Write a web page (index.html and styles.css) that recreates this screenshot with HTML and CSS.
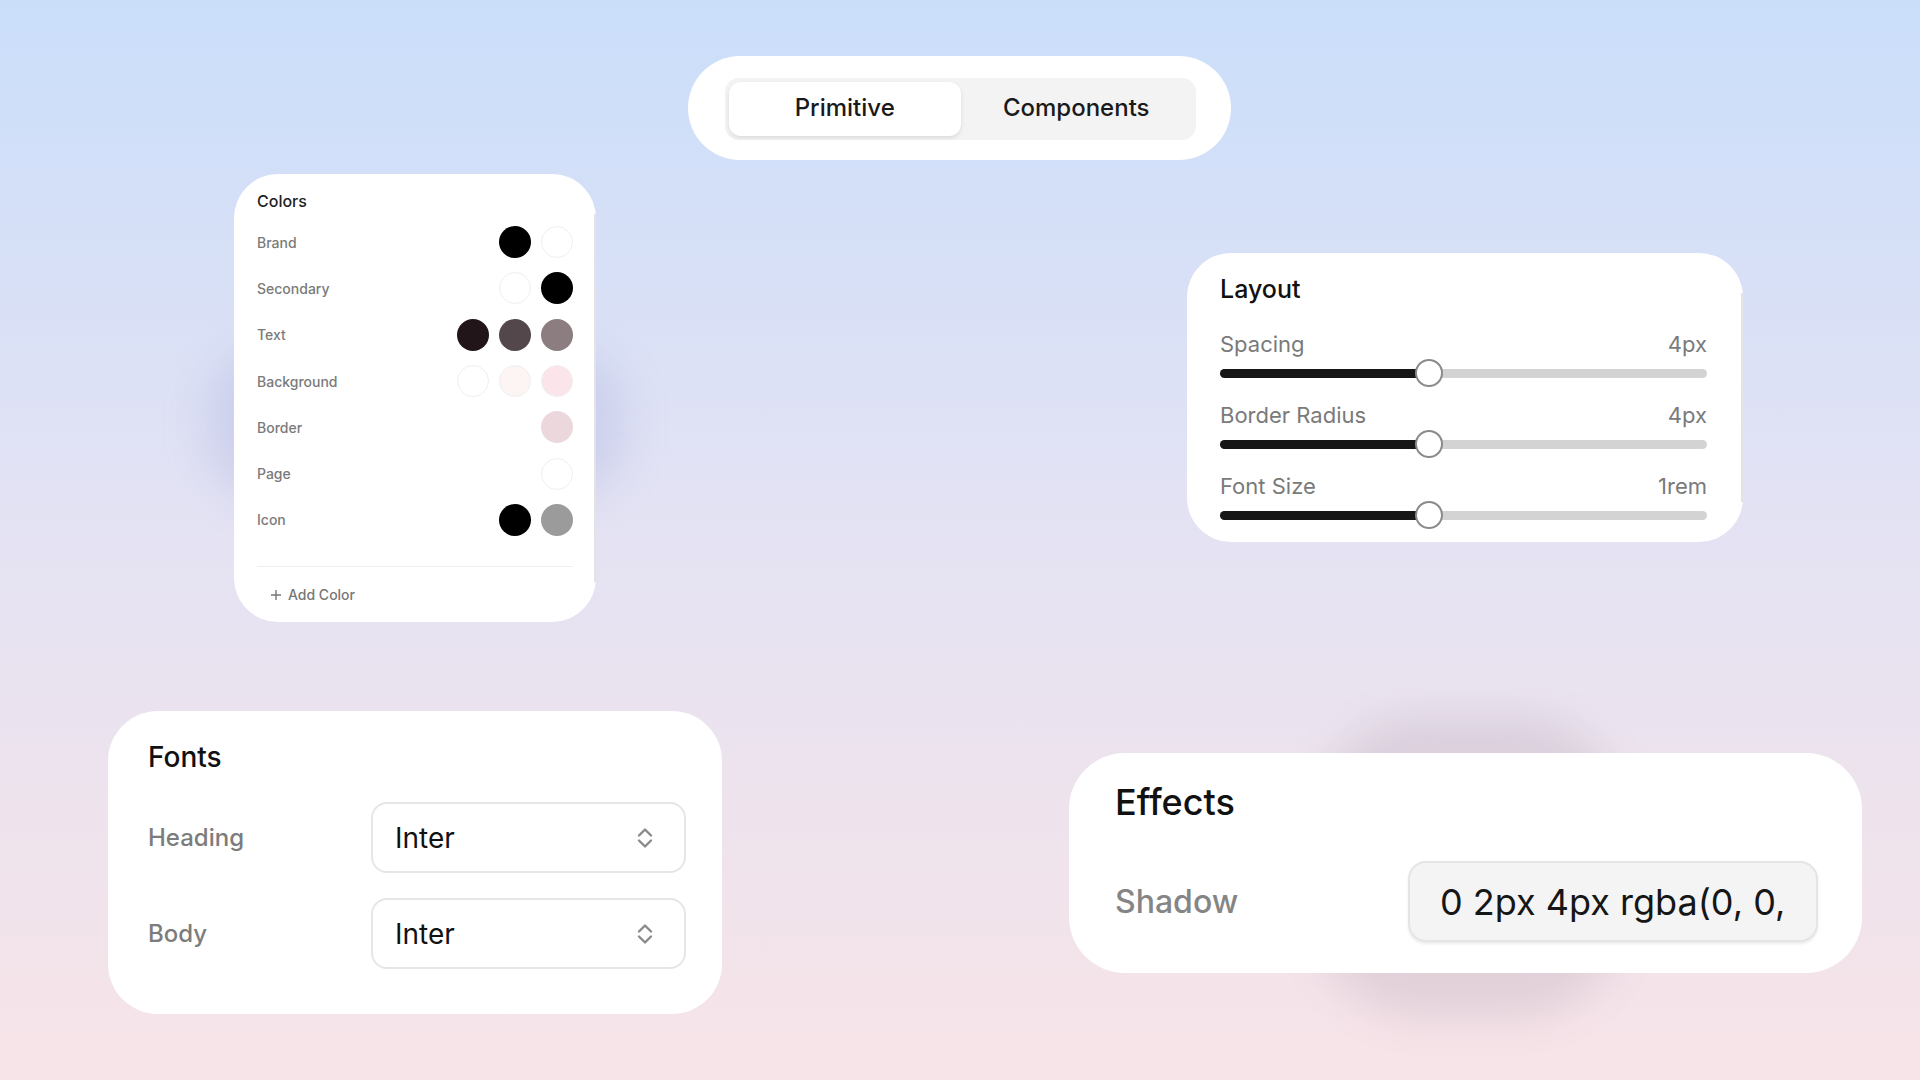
FILE: index.html
```html
<!DOCTYPE html>
<html lang="en">
<head>
  <meta charset="UTF-8">
  <meta name="viewport" content="width=device-width, initial-scale=1.0">
  <title>Theme Builder – Primitives</title>
  <link rel="stylesheet" href="styles.css">
</head>
<body>
  <main class="canvas">

    <!-- Mode switch -->
    <div class="card tabs-card">
      <div class="tabs">
        <button class="tab active">Primitive</button>
        <button class="tab">Components</button>
      </div>
    </div>

    <!-- Colors -->
    <section class="card colors-card">
      <h3 class="colors-title">Colors</h3>
      <ul class="color-list">
        <li class="color-row">
          <span class="color-name">Brand</span>
          <span class="swatches">
            <i class="swatch" style="background:#000000"></i>
            <i class="swatch light" style="background:#ffffff"></i>
          </span>
        </li>
        <li class="color-row">
          <span class="color-name">Secondary</span>
          <span class="swatches">
            <i class="swatch light" style="background:#ffffff"></i>
            <i class="swatch" style="background:#000000"></i>
          </span>
        </li>
        <li class="color-row">
          <span class="color-name">Text</span>
          <span class="swatches">
            <i class="swatch" style="background:#221519"></i>
            <i class="swatch" style="background:#54474b"></i>
            <i class="swatch" style="background:#8c7d81"></i>
          </span>
        </li>
        <li class="color-row">
          <span class="color-name">Background</span>
          <span class="swatches">
            <i class="swatch light" style="background:#ffffff"></i>
            <i class="swatch light" style="background:#fdf4f4"></i>
            <i class="swatch light" style="background:#fbe5ea"></i>
          </span>
        </li>
        <li class="color-row">
          <span class="color-name">Border</span>
          <span class="swatches">
            <i class="swatch" style="background:#ecd8dc"></i>
          </span>
        </li>
        <li class="color-row">
          <span class="color-name">Page</span>
          <span class="swatches">
            <i class="swatch light" style="background:#ffffff"></i>
          </span>
        </li>
        <li class="color-row">
          <span class="color-name">Icon</span>
          <span class="swatches">
            <i class="swatch" style="background:#000000"></i>
            <i class="swatch" style="background:#9b9b9b"></i>
          </span>
        </li>
      </ul>
      <button class="add-color">
        <svg width="12" height="12" viewBox="0 0 12 12"><path d="M6 1v10M1 6h10" stroke="#777" stroke-width="1.4" fill="none"/></svg>
        Add Color
      </button>
    </section>

    <!-- Layout -->
    <section class="card layout-card">
      <h3 class="layout-title">Layout</h3>
      <div class="slider-row">
        <div class="slider-head"><span>Spacing</span><span>4px</span></div>
        <div class="track"><div class="fill" style="width:43%"></div><div class="thumb" style="left:43%"></div></div>
      </div>
      <div class="slider-row">
        <div class="slider-head"><span>Border Radius</span><span>4px</span></div>
        <div class="track"><div class="fill" style="width:43%"></div><div class="thumb" style="left:43%"></div></div>
      </div>
      <div class="slider-row">
        <div class="slider-head"><span>Font Size</span><span>1rem</span></div>
        <div class="track"><div class="fill" style="width:43%"></div><div class="thumb" style="left:43%"></div></div>
      </div>
    </section>

    <!-- Fonts -->
    <section class="card fonts-card">
      <h3 class="fonts-title">Fonts</h3>
      <div class="font-grid">
        <span class="font-label">Heading</span>
        <div class="select">
          <span>Inter</span>
          <svg width="18" height="24" viewBox="0 0 18 24"><path d="M3 9.5L9 3.5l6 6M3 14.5l6 6 6-6" stroke="#8a8a8a" stroke-width="2.4" fill="none" stroke-linecap="round" stroke-linejoin="round"/></svg>
        </div>
        <span class="font-label">Body</span>
        <div class="select">
          <span>Inter</span>
          <svg width="18" height="24" viewBox="0 0 18 24"><path d="M3 9.5L9 3.5l6 6M3 14.5l6 6 6-6" stroke="#8a8a8a" stroke-width="2.4" fill="none" stroke-linecap="round" stroke-linejoin="round"/></svg>
        </div>
      </div>
    </section>

    <!-- Effects -->
    <section class="card effects-card">
      <h3 class="effects-title">Effects</h3>
      <div class="effect-row">
        <span class="effect-label">Shadow</span>
        <div class="effect-input"><span class="effect-value">0 2px 4px rgba(0, 0, 0, 0.1)</span></div>
      </div>
    </section>

  </main>
</body>
</html>
```

FILE: styles.css
```css
/* Page */
body {
  margin: 0;
  font-family: 'Inter', 'Noto Sans', sans-serif;
  color: #1a1a1a;
  overflow: hidden;
}

.canvas {
  position: relative;
  z-index: 0;
  width: 1920px;
  height: 1080px;
  background: linear-gradient(180deg, #cadefa 0%, #e2e2f4 45%, #ece3ee 70%, #f7e4e8 100%);
}

h3 {
  margin: 0;
  font-weight: 500;
}

/* Floating cards */
.card {
  position: absolute;
  background: #fff;
  box-sizing: border-box;
}

/* Mode switch */
.tabs-card {
  left: 688px;
  top: 56px;
  width: 543px;
  height: 104px;
  border-radius: 52px;
  padding: 22px 35px 0 37px;
}

.tabs {
  display: grid;
  grid-template-columns: 1fr 1fr;
  padding: 4px;
  background: #f3f3f3;
  border-radius: 14px;
}

.tab {
  height: 54px;
  padding: 0 0 3px;
  border: none;
  background: transparent;
  font-family: inherit;
  font-size: 24px;
  font-weight: 500;
  color: #1a1a1a;
  border-radius: 12px;
}

.tab.active {
  background: #fff;
  box-shadow: 0 2px 4px rgba(0, 0, 0, 0.1);
}

/* Colors */
.colors-card {
  left: 234px;
  top: 174px;
  width: 362px;
  height: 448px;
  border-radius: 44px;
  padding: 17px 23px 0 23px;
}

.colors-card::before {
  content: '';
  position: absolute;
  left: -28px;
  right: -28px;
  top: 150px;
  height: 200px;
  background: rgba(140, 150, 210, 0.22);
  filter: blur(20px);
  border-radius: 40%;
  z-index: -1;
}

.colors-card::after,
.layout-card::after {
  content: '';
  position: absolute;
  right: 0;
  top: 40px;
  bottom: 40px;
  width: 2px;
  background: #e3e3e6;
}

.colors-title {
  font-size: 16px;
  line-height: 20px;
  color: #222;
  margin-bottom: 8px;
}

.color-list {
  list-style: none;
  margin: 0;
  padding: 0 0 23px;
  border-bottom: 1px solid #f0f0f0;
}

.color-row {
  display: flex;
  align-items: center;
  justify-content: space-between;
  height: 46.3px;
}

.color-name {
  font-size: 14px;
  font-weight: 500;
  color: #7a7a7a;
}

.swatches {
  display: flex;
  gap: 10px;
}

.swatch {
  width: 32px;
  height: 32px;
  border-radius: 50%;
  box-sizing: border-box;
}

.swatch.light {
  border: 1.5px solid #efefef;
}

.add-color {
  display: flex;
  align-items: center;
  gap: 6px;
  margin: 19px 0 0 13px;
  padding: 0;
  border: none;
  background: none;
  font-family: inherit;
  font-size: 14px;
  font-weight: 500;
  color: #777;
}

/* Layout */
.layout-card {
  left: 1187px;
  top: 253px;
  width: 556px;
  height: 289px;
  border-radius: 44px;
  padding: 21px 36px 0 33px;
}

.layout-title {
  font-size: 25px;
  line-height: 30px;
  color: #111;
  margin-bottom: 28px;
}

.slider-row {
  margin-bottom: 16px;
}

.slider-head {
  display: flex;
  justify-content: space-between;
  font-size: 22px;
  line-height: 24px;
  color: #7a7a7a;
  margin-bottom: 3px;
}

.track {
  position: relative;
  height: 28px;
}

.track::before {
  content: '';
  position: absolute;
  left: 0;
  right: 0;
  top: 10px;
  height: 9px;
  border-radius: 5px;
  background: #d3d3d3;
}

.fill {
  position: absolute;
  left: 0;
  top: 10px;
  height: 9px;
  border-radius: 5px;
  background: #161616;
}

.thumb {
  position: absolute;
  top: 0;
  width: 28px;
  height: 28px;
  margin-left: -14px;
  border-radius: 50%;
  border: 2px solid #8a8a8a;
  background: #fff;
  box-sizing: border-box;
}

/* Fonts */
.fonts-card {
  left: 108px;
  top: 711px;
  width: 614px;
  height: 303px;
  border-radius: 50px;
  padding: 29px 36px 0 40px;
}

.fonts-title {
  font-size: 28px;
  line-height: 34px;
  color: #111;
  margin-bottom: 28px;
}

.font-grid {
  display: grid;
  grid-template-columns: 223px 1fr;
  row-gap: 25px;
  align-items: center;
}

.font-label {
  font-size: 24px;
  font-weight: 500;
  color: #7c7c7c;
}

.select {
  display: flex;
  align-items: center;
  justify-content: space-between;
  height: 71px;
  box-sizing: border-box;
  padding: 0 30px 0 22px;
  border: 2px solid #e6e6e6;
  border-radius: 16px;
  font-size: 28px;
  color: #111;
}

/* Effects */
.effects-card {
  left: 1069px;
  top: 753px;
  width: 793px;
  height: 220px;
  border-radius: 56px;
  padding: 27px 44px 0 46px;
}

.effects-card::before {
  content: '';
  position: absolute;
  left: 245px;
  width: 310px;
  top: -36px;
  bottom: -44px;
  background: rgba(80, 55, 80, 0.11);
  filter: blur(20px);
  border-radius: 35%;
  z-index: -1;
}

.effects-title {
  font-size: 36px;
  line-height: 44px;
  color: #111;
  margin-bottom: 37px;
}

.effect-row {
  display: grid;
  grid-template-columns: 293px minmax(0, 1fr);
  align-items: center;
}

.effect-input {
  min-width: 0;
  height: 81px;
  box-sizing: border-box;
  display: flex;
  align-items: center;
  padding: 0 24px 0 30px;
  background: #f4f4f4;
  border: 2px solid #e5e5e5;
  border-radius: 18px;
  box-shadow: 0 2px 3px rgba(0, 0, 0, 0.08);
}

.effect-label {
  font-size: 32px;
  font-weight: 500;
  color: #858585;
}

.effect-value {
  flex: 1;
  min-width: 0;
  overflow: hidden;
  white-space: nowrap;
  font-size: 36px;
  color: #161616;
}
```
